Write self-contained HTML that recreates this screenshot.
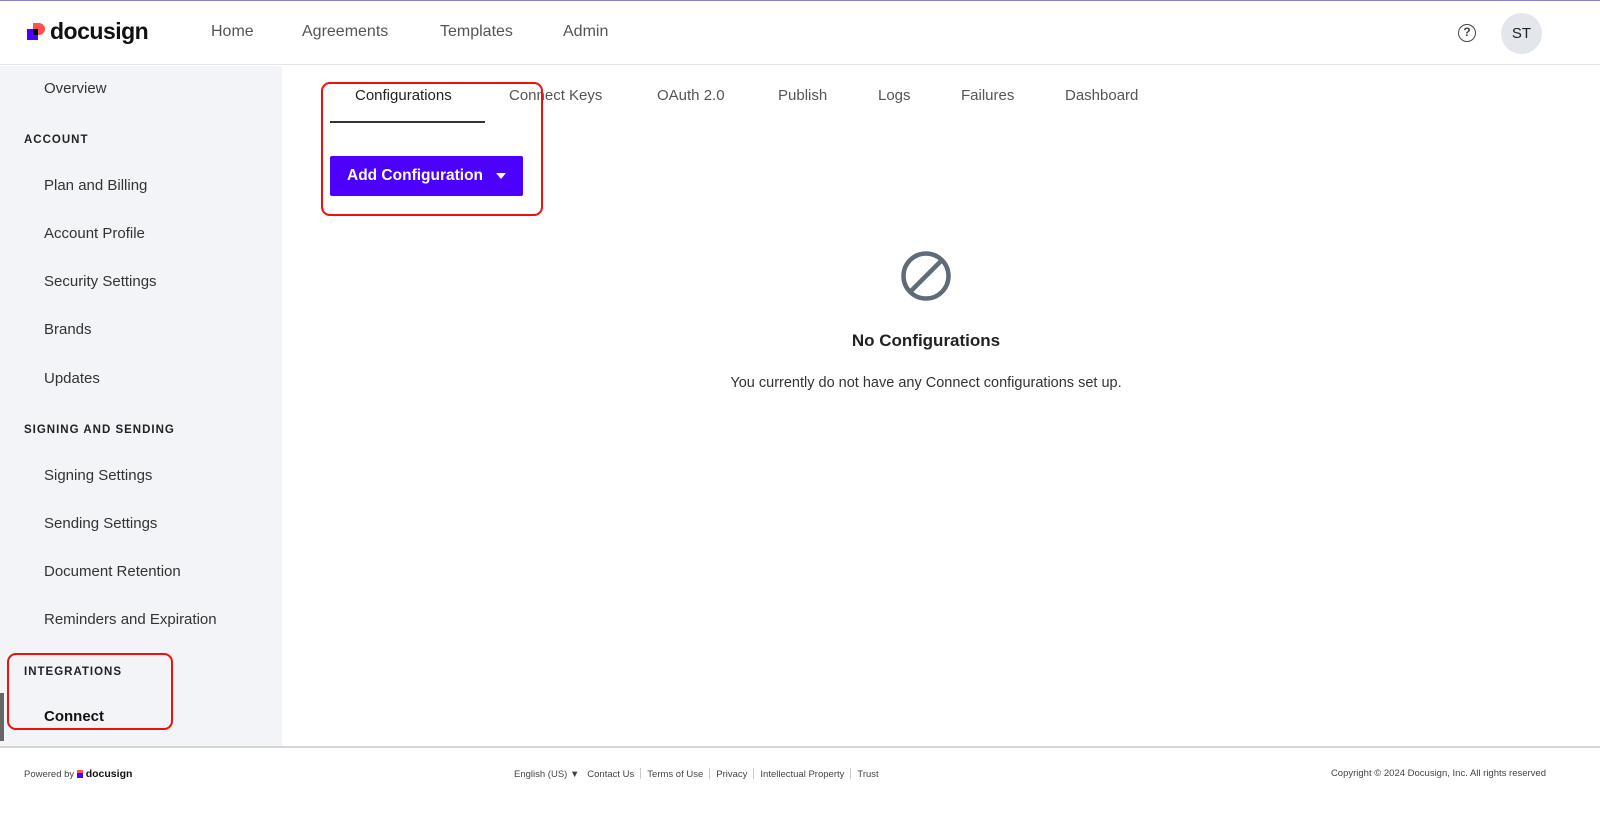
<!DOCTYPE html>
<html><head><style>
*{box-sizing:border-box;margin:0;padding:0}
body{width:1600px;height:813px;background:#fff;font-family:"Liberation Sans",sans-serif;position:relative;overflow:hidden;color:#222}
.topline{position:absolute;left:0;top:0;width:1600px;height:1px;background:#8c7fd0}
header{position:absolute;left:0;top:1px;width:1600px;height:64px;border-bottom:1px solid #e6e6e6;background:#fff}
.logo{position:absolute;left:27px;top:20px;}
.nav a{position:absolute;top:22px;font-size:16px;color:#555}
.help{position:absolute;left:1458px;top:23px;width:18px;height:18px;border:1.5px solid #444;border-radius:50%;font-size:12px;text-align:center;line-height:15px;color:#444;font-weight:bold}
.av{position:absolute;left:1501px;top:12px;width:41px;height:41px;border-radius:50%;background:#e3e6ec;font-size:15px;text-align:center;line-height:41px;color:#222}
aside{position:absolute;left:0;top:66px;width:282px;height:681px;background:#f2f4f7}
.it{position:absolute;left:44px;font-size:15px;color:#333}
.hd{position:absolute;left:24px;font-size:11.5px;letter-spacing:1px;color:#222;font-weight:bold}
.tab{position:absolute;top:87px;font-size:15px;color:#555}
.red{position:absolute;border:2px solid #f0100a;border-radius:9px}
footer{position:absolute;left:0;top:746px;width:1600px;height:51px;border-top:2px solid #d5d5d5;font-size:9.5px;color:#444}
footer span{position:absolute;top:20px}
.sep{display:inline-block;width:1px;height:11px;background:#ccc;margin:0 6px;vertical-align:-2px}
</style></head><body>
<div class="topline"></div>
<header>
 <div class="logo">
  <svg width="20" height="20" viewBox="0 0 20 20" style="position:absolute;left:0;top:2px"><path d="M6 0h6a6 6 0 0 1 0 12H6z" fill="#ff5252"/><rect x="0" y="6" width="11" height="11" fill="#4c00ff"/><rect x="6" y="6" width="5" height="6" fill="#000"/></svg>
  <span style="position:absolute;left:23px;top:-3px;font-size:23px;font-weight:bold;color:#111;letter-spacing:-0.5px">docusign</span>
 </div>
 <div class="nav"><a style="left:211px">Home</a><a style="left:302px">Agreements</a><a style="left:440px">Templates</a><a style="left:563px">Admin</a></div>
 <div class="help">?</div>
 <div class="av">ST</div>
</header>
<aside>
 <div class="it" style="top:14px">Overview</div>
 <div class="hd" style="top:68px">ACCOUNT</div>
 <div class="it" style="top:111px">Plan and Billing</div>
 <div class="it" style="top:159px">Account Profile</div>
 <div class="it" style="top:207px">Security Settings</div>
 <div class="it" style="top:255px">Brands</div>
 <div class="it" style="top:304px">Updates</div>
 <div class="hd" style="top:358px">SIGNING AND SENDING</div>
 <div class="it" style="top:401px">Signing Settings</div>
 <div class="it" style="top:449px">Sending Settings</div>
 <div class="it" style="top:497px">Document Retention</div>
 <div class="it" style="top:545px">Reminders and Expiration</div>
 <div class="hd" style="top:600px">INTEGRATIONS</div>
 <div class="it" style="top:642px;color:#111;font-weight:bold">Connect</div>
 <div style="position:absolute;left:0;top:627px;width:4px;height:48px;background:#666"></div>
</aside>
<div class="red" style="left:7px;top:653px;width:166px;height:77px"></div>
<div class="tab" style="left:355px;color:#222">Configurations</div>
<div style="position:absolute;left:330px;top:121px;width:155px;height:2px;background:#333"></div>
<div class="tab" style="left:509px">Connect Keys</div>
<div class="tab" style="left:657px">OAuth 2.0</div>
<div class="tab" style="left:778px">Publish</div>
<div class="tab" style="left:878px">Logs</div>
<div class="tab" style="left:961px">Failures</div>
<div class="tab" style="left:1065px">Dashboard</div>
<div style="position:absolute;left:330px;top:156px;width:193px;height:40px;background:#4c00ff;border-radius:2px;color:#fff;font-size:15.5px;font-weight:bold;line-height:40px;padding-left:17px">Add Configuration<span style="position:absolute;left:166px;top:17px;width:0;height:0;border-left:5px solid transparent;border-right:5px solid transparent;border-top:6px solid #fff"></span></div>
<div class="red" style="left:321px;top:82px;width:222px;height:134px"></div>
<svg style="position:absolute;left:900px;top:250px" width="52" height="52" viewBox="0 0 52 52"><circle cx="26" cy="26" r="22.5" fill="none" stroke="#5f6b77" stroke-width="4.5"/><line x1="10" y1="42" x2="42" y2="10" stroke="#5f6b77" stroke-width="4.5"/></svg>
<div style="position:absolute;left:0;width:1852px;top:331px;text-align:center;font-size:17px;font-weight:bold;color:#222">No Configurations</div>
<div style="position:absolute;left:0;width:1852px;top:375px;text-align:center;font-size:14.5px;color:#333">You currently do not have any Connect configurations set up.</div>
<footer>
 <span style="left:24px">Powered by <b style="color:#111;font-size:10.5px"><i style="display:inline-block;width:6px;height:8px;background:#4c00ff;border-top:3px solid #ff5252;vertical-align:-1px"></i> docusign</b></span>
 <span style="left:514px">English (US) &#9660; &nbsp; Contact Us<i class="sep"></i>Terms of Use<i class="sep"></i>Privacy<i class="sep"></i>Intellectual Property<i class="sep"></i>Trust</span>
 <span style="right:54px">Copyright © 2024 Docusign, Inc. All rights reserved</span>
</footer>
</body></html>
